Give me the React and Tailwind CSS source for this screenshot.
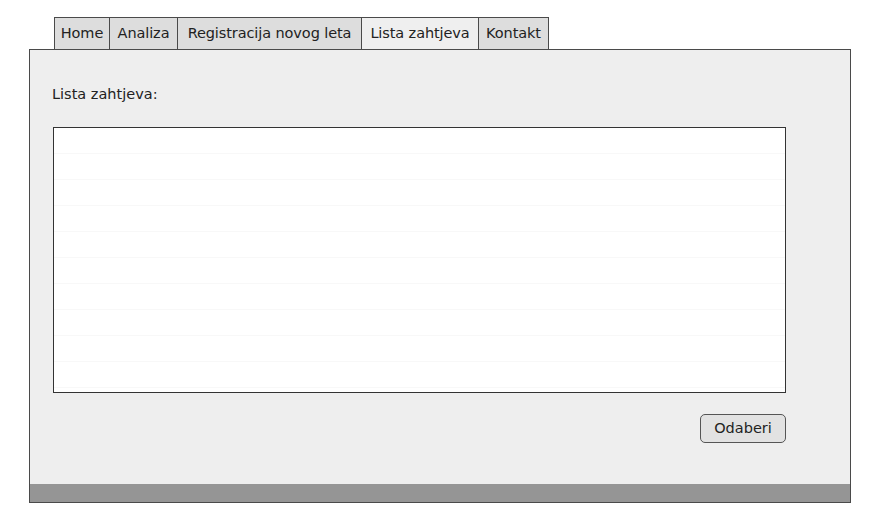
import React from "react";

const tabs = [
  { label: "Home", w: "w-[55px]" },
  { label: "Analiza", w: "w-[68px]" },
  { label: "Registracija novog leta", w: "w-[184px]" },
  { label: "Lista zahtjeva", w: "w-[117px]", active: true },
  { label: "Kontakt", w: "w-[71px]" },
];

export default function App() {
  return (
    <div className="w-[877px] h-[529px] bg-white pt-[17px] pl-[29px] text-[#222]" style={{ fontFamily: "'DejaVu Sans', sans-serif" }}>
      <div className="flex ml-[25px] h-[32px]">
        {tabs.map((t, i) => (
          <div
            key={t.label}
            className={`${t.w} h-[32px] flex items-center justify-center whitespace-nowrap border-t border-l border-[#4a4a4a] ${i === tabs.length - 1 ? "border-r" : ""} ${t.active ? "bg-[#efefef]" : "bg-[#dddddd]"} text-[14.5px] tracking-[-0.1px] text-[#222]`}
          >
            {t.label}
          </div>
        ))}
      </div>
      <div className="w-[822px] h-[454px] border border-[#4a4a4a] bg-[#eeeeee] flex flex-col">
        <div className="flex-1 pl-[22px] pt-[34px]">
          <div className="text-[14.5px] h-[20px] leading-[20px] text-[#222]">Lista zahtjeva:</div>
          <div className="mt-[23px] ml-[1px] w-[733px] h-[266px] border border-[#333] bg-white flex flex-col">
            {Array.from({ length: 10 }).map((_, i) => (
              <div key={i} className="h-[26px] border-b border-[#f8f8f8]" />
            ))}
          </div>
          <div className="w-[734px] flex justify-end mt-[21px]">
            <button className="w-[86px] h-[29px] rounded-[5px] border border-[#555] bg-[#e2e2e2] text-[14.5px] text-[#222]">
              Odaberi
            </button>
          </div>
        </div>
        <div className="h-[18px] bg-[#959595]" />
      </div>
    </div>
  );
}
